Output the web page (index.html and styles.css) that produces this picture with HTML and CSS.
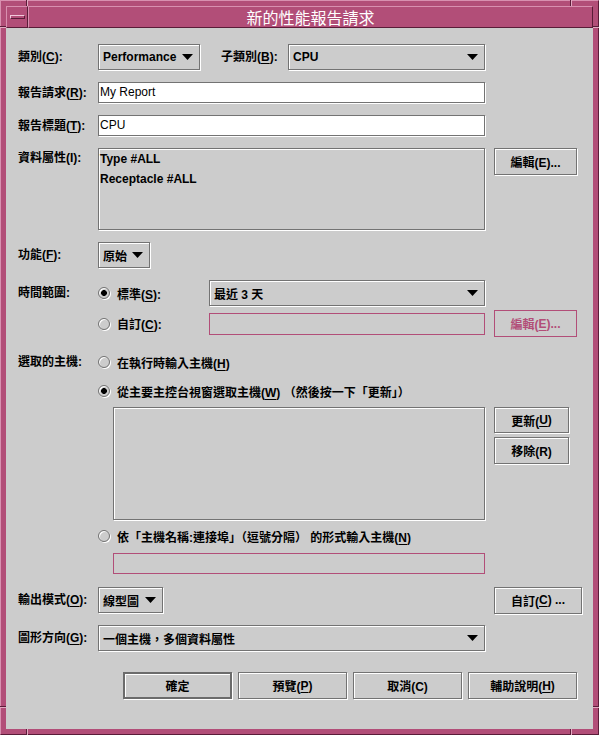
FILE: index.html
```html
<!DOCTYPE html>
<html lang="zh-Hant">
<head>
<meta charset="utf-8">
<title>新的性能報告請求</title>
<link rel="stylesheet" href="styles.css">
</head>
<body>
<div class="window">
  <div class="titlebar">
    <div class="menu-btn"><span class="menu-glyph"></span></div>
    <div class="title">新的性能報告請求</div>
  </div>
  <div class="content">
    <div class="row r1">
      <div class="label">類別(<u>C</u>):</div>
      <div class="option etched w-perf"><span>Performance</span><svg class="arrow" width="11" height="6" viewBox="0 0 11 6"><polygon points="0,0 11,0 5.5,6"/></svg></div>
      <div class="label label2">子類別(<u>B</u>):</div>
      <div class="option etched w-cpu"><span>CPU</span><svg class="arrow" width="11" height="6" viewBox="0 0 11 6"><polygon points="0,0 11,0 5.5,6"/></svg></div>
    </div>

    <div class="row r2">
      <div class="label">報告請求(<u>R</u>):</div>
      <div class="field w-main">My Report</div>
    </div>

    <div class="row r3">
      <div class="label">報告標題(<u>T</u>):</div>
      <div class="field w-main">CPU</div>
    </div>

    <div class="row r4">
      <div class="label top">資料屬性(I):</div>
      <div class="list etched w-main">
        <div class="list-item">Type #ALL</div>
        <div class="list-item">Receptacle #ALL</div>
      </div>
      <div class="btn etched side w-edit">編輯(E)...</div>
    </div>

    <div class="row r5">
      <div class="label">功能(<u>F</u>):</div>
      <div class="option etched w-func"><span>原始</span><svg class="arrow" width="11" height="6" viewBox="0 0 11 6"><polygon points="0,0 11,0 5.5,6"/></svg></div>
    </div>

    <div class="row r6">
      <div class="label">時間範圍:</div>
      <div class="radio-cell"><span class="radio on"></span><span>標準(<u>S</u>):</span></div>
      <div class="option etched w-time"><span>最近 3 天</span><svg class="arrow" width="11" height="6" viewBox="0 0 11 6"><polygon points="0,0 11,0 5.5,6"/></svg></div>
    </div>

    <div class="row r7">
      <div class="label"></div>
      <div class="radio-cell"><span class="radio"></span><span>自訂(<u>C</u>):</span></div>
      <div class="field disabled w-time"></div>
      <div class="btn disabled side w-edit">編輯(<u>E</u>)...</div>
    </div>

    <div class="row r8">
      <div class="label">選取的主機:</div>
      <div class="radio-line"><span class="radio"></span><span>在執行時輸入主機(<u>H</u>)</span></div>
    </div>

    <div class="row r9">
      <div class="label"></div>
      <div class="radio-line"><span class="radio on"></span><span>從主要主控台視窗選取主機(<u>W</u>) （然後按一下「更新」）</span></div>
    </div>

    <div class="row r10">
      <div class="label"></div>
      <div class="list etched w-hosts"></div>
      <div class="btn-col side">
        <div class="btn etched w-small h-upd">更新(<u>U</u>)</div>
        <div class="btn etched w-small">移除(R)</div>
      </div>
    </div>

    <div class="row r11">
      <div class="label"></div>
      <div class="radio-line"><span class="radio"></span><span>依「主機名稱:連接埠」（逗號分隔） 的形式輸入主機(<u>N</u>)</span></div>
    </div>

    <div class="row r12">
      <div class="label"></div>
      <div class="field disabled w-hosts"></div>
    </div>

    <div class="row r13">
      <div class="label">輸出模式(<u>O</u>):</div>
      <div class="main-cell">
        <div class="option etched w-out"><span>線型圖</span><svg class="arrow" width="11" height="6" viewBox="0 0 11 6"><polygon points="0,0 11,0 5.5,6"/></svg></div>
      </div>
      <div class="btn etched side w-custom">自訂(<u>C</u>) ...</div>
    </div>

    <div class="row r14">
      <div class="label">圖形方向(<u>G</u>):</div>
      <div class="option etched w-main"><span>一個主機，多個資料屬性</span><svg class="arrow" width="11" height="6" viewBox="0 0 11 6"><polygon points="0,0 11,0 5.5,6"/></svg></div>
    </div>

    <div class="row r15">
      <div class="btn etched default w-bottom">確定</div>
      <div class="btn etched w-bottom">預覽(<u>P</u>)</div>
      <div class="btn etched w-bottom">取消(C)</div>
      <div class="btn etched w-bottom">輔助說明(<u>H</u>)</div>
    </div>
  </div>

  <span class="seam v s-tl"></span>
  <span class="seam h s-lt"></span>
  <span class="seam v s-tr"></span>
  <span class="seam h s-rt"></span>
  <span class="seam v s-bl"></span>
  <span class="seam h s-lb"></span>
  <span class="seam v s-br"></span>
  <span class="seam h s-rb"></span>
</div>
</body>
</html>
```

FILE: styles.css
```css
* { box-sizing: border-box; }

html, body {
  margin: 0;
  padding: 0;
}

body {
  width: 599px;
  height: 735px;
  overflow: hidden;
  background: #cccccc;
  font-family: "Liberation Sans", "Noto Sans CJK TC", sans-serif;
  font-size: 12px;
  font-weight: bold;
  color: #000;
}

u {
  text-decoration: underline;
  text-underline-offset: 2px;
  text-decoration-thickness: 1px;
}

.window {
  position: relative;
  width: 599px;
  height: 735px;
  background: #b24e78;
  border: 1px solid;
  border-color: #d890b0 #5a1c38 #5a1c38 #d890b0;
  padding: 5px;
  display: flex;
  flex-direction: column;
}

/* ---------- title bar ---------- */
.titlebar {
  height: 22px;
  display: flex;
  flex-shrink: 0;
}

.menu-btn {
  width: 22px;
  height: 22px;
  border: 1px solid;
  border-color: #d890b0 #5a1c38 #5a1c38 #d890b0;
  display: flex;
  align-items: center;
  justify-content: center;
}

.menu-glyph {
  width: 15px;
  height: 4px;
  border: 1px solid;
  border-color: #f2c9db #5a1c38 #5a1c38 #f2c9db;
}

.title {
  flex: 1;
  height: 22px;
  border: 1px solid;
  border-color: #d890b0 #5a1c38 #5a1c38 #d890b0;
  color: #fff;
  font-family: "Noto Sans CJK TC", sans-serif;
  font-weight: normal;
  font-size: 16px;
  line-height: 20px;
  text-align: center;
}

/* ---------- content ---------- */
.content {
  flex: 1;
  background: #cccccc;
  padding: 0 16px 0 12px;
  display: flex;
  flex-direction: column;
}

.row {
  display: flex;
  align-items: center;
  flex-shrink: 0;
}

.label {
  width: 80px;
  flex-shrink: 0;
  white-space: nowrap;
  line-height: 20px;
}

.label.top { align-self: flex-start; }

.label2 {
  width: 67px;
  margin-left: 21px;
}

.etched {
  border: 1px solid #737373;
  box-shadow: inset 1px 1px 0 #fff, 1px 1px 0 #fff;
}

.option {
  height: 26px;
  display: flex;
  align-items: center;
  justify-content: space-between;
  padding: 0 6px 0 4px;
  flex-shrink: 0;
  white-space: nowrap;
}

.arrow { display: block; fill: #000; }

.field {
  height: 21px;
  background: #fff;
  border: 1px solid #737373;
  box-shadow: 1px 1px 0 #fff;
  font-weight: normal;
  padding-left: 1px;
  line-height: 19px;
  flex-shrink: 0;
}

.field.disabled {
  background: transparent;
  border-color: #b24e78;
  box-shadow: none;
}

.list {
  flex-shrink: 0;
  padding: 0 1px;
}

.list-item {
  line-height: 20px;
  white-space: nowrap;
}

.btn {
  height: 27px;
  display: flex;
  align-items: center;
  justify-content: center;
  flex-shrink: 0;
  white-space: nowrap;
}

.btn.disabled {
  border: 1px solid #b24e78;
  color: #b24e78;
}

.btn.default {
  border: 2px solid #6b6b6b;
}

.side { margin-left: 9px; }

.btn-col {
  display: flex;
  flex-direction: column;
  gap: 4px;
  align-self: flex-start;
}

.main-cell {
  width: 387px;
  flex-shrink: 0;
  display: flex;
}

/* radios */
.radio-cell {
  width: 111px;
  flex-shrink: 0;
  display: flex;
  align-items: center;
  gap: 7px;
  white-space: nowrap;
}

.radio-line {
  display: flex;
  align-items: center;
  gap: 7px;
  white-space: nowrap;
}

.radio {
  width: 12px;
  height: 12px;
  border-radius: 50%;
  border: 1px solid #737373;
  box-shadow: 1px 1px 0 #fff, inset 1px 1px 0 #fff;
  flex-shrink: 0;
}

.radio.on {
  background: radial-gradient(circle at 50% 50%, #000 0, #000 2.6px, transparent 3.2px);
}

/* widths */
.w-perf { width: 102px; }
.w-cpu { width: 197px; }
.w-main { width: 387px; }
.w-edit { width: 83px; }
.w-func { width: 52px; }
.w-time { width: 276px; }
.w-hosts { width: 372px; margin-left: 15px; }
.w-small { width: 75px; }
.h-upd { height: 26px; }
.w-out { width: 65px; }
.w-custom { width: 88px; }
.w-bottom { width: 109px; }

.w-time.field { height: 22px; }

/* vertical rhythm */
.r1 { margin-top: 16px; height: 26px; }
.r2 { margin-top: 12px; height: 21px; }
.r3 { margin-top: 12px; height: 21px; }
.r4 { margin-top: 12px; height: 82px; align-items: flex-start; }
.r4 .list { height: 82px; }
.r5 { margin-top: 12px; height: 26px; }
.r6 { margin-top: 12px; height: 26px; }
.r7 { margin-top: 4px; height: 27px; }
.r8 { margin-top: 18px; height: 14px; }
.r9 { margin-top: 15px; height: 14px; }
.r10 { margin-top: 9px; height: 113px; align-items: flex-start; }
.r10 .list { height: 113px; }
.r11 { margin-top: 9px; height: 14px; }
.r12 { margin-top: 10px; height: 21px; }
.r13 { margin-top: 13px; height: 26px; }
.r14 { margin-top: 12px; height: 26px; }
.r15 { margin-top: 21px; height: 27px; padding-left: 105px; gap: 6px; }

/* resize-handle seams on the frame */
.seam {
  position: absolute;
  display: block;
}
.seam.v {
  width: 2px;
  height: 6px;
  border-left: 1px solid #5a1c38;
  border-right: 1px solid #e4a9c2;
}
.seam.h {
  width: 6px;
  height: 2px;
  border-top: 1px solid #5a1c38;
  border-bottom: 1px solid #e4a9c2;
}
.s-tl { left: 25px; top: -1px; }
.s-tr { left: 569px; top: -1px; }
.s-bl { left: 25px; bottom: -1px; }
.s-br { left: 569px; bottom: -1px; }
.s-lt { left: -1px; top: 25px; }
.s-rt { right: -1px; top: 25px; }
.s-lb { left: -1px; top: 705px; }
.s-rb { right: -1px; top: 705px; }
```
